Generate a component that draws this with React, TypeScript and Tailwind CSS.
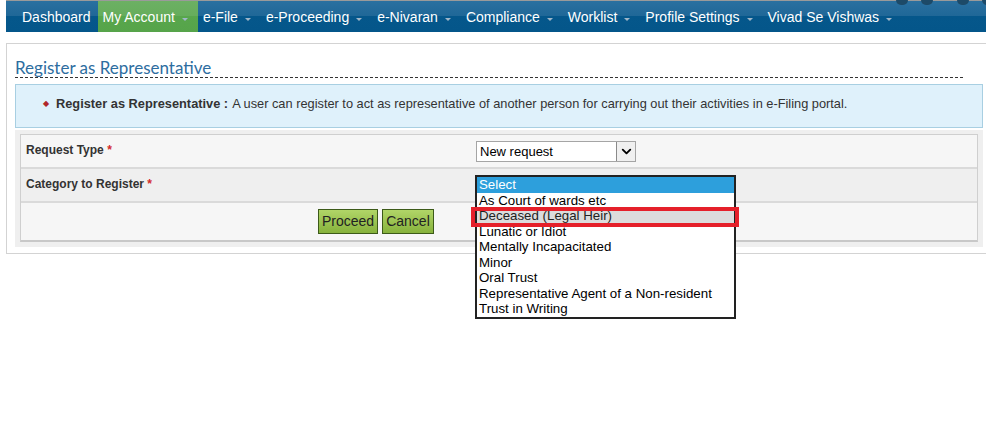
import { ChevronDown } from "lucide-react";

const navItems = [
  { label: "Dashboard", caret: false },
  { label: "My Account", caret: true, active: true },
  { label: "e-File", caret: true },
  { label: "e-Proceeding", caret: true },
  { label: "e-Nivaran", caret: true },
  { label: "Compliance", caret: true },
  { label: "Worklist", caret: true },
  { label: "Profile Settings", caret: true },
  { label: "Vivad Se Vishwas", caret: true },
];

const categories = [
  "As Court of wards etc",
  "Deceased (Legal Heir)",
  "Lunatic or Idiot",
  "Mentally Incapacitated",
  "Minor",
  "Oral Trust",
  "Representative Agent of a Non-resident",
  "Trust in Writing",
];

const Caret = () => (
  <span className="ml-[7px] inline-block w-0 h-0 border-l-[3px] border-r-[3px] border-t-[3px] border-l-transparent border-r-transparent border-t-[#9fb6c8] translate-y-[2px]" />
);

export default function App() {
  return (
    <div className="w-[986px] h-[439px] bg-white overflow-hidden font-['Liberation_Sans',Arial,sans-serif] text-[#333]">
      {/* Top nav */}
      <div className="relative ml-[6px] h-[32px] border-t border-[#9a9a9a] bg-[linear-gradient(#2a70a0_0%,#1f6797_50%,#05578b_50%,#04568a_100%)] flex items-stretch pl-[10px]">
        {navItems.map((item) => (
          <div
            key={item.label}
            className={`flex items-center pt-[2px] text-[14px] text-white ${
              item.caret ? "pl-[5px] pr-[10px]" : "pl-[6px] pr-[7px]"
            } ${item.active ? "bg-[linear-gradient(#6cb063_0%,#66ad5c_50%,#58a64c_50%,#56a44a_100%)]" : ""}`}
          >
            <span>{item.label}</span>
            {item.caret && <Caret />}
          </div>
        ))}
        {/* partial round buttons peeking at the top */}
        <div className="absolute top-[-6px] left-[890px] flex gap-[13px]">
          <span className="w-[12px] h-[10px] rounded-full bg-[#1d4a68]" />
          <span className="w-[12px] h-[10px] rounded-full bg-[#1d4a68]" />
          <span className="ml-[11px] w-[12px] h-[10px] rounded-full bg-[#1d4a68]" />
          <span className="w-[12px] h-[10px] rounded-full bg-[#1d4a68]" />
        </div>
      </div>

      {/* Content panel */}
      <div className="mt-[11px] ml-[6px] w-[990px] h-[211px] border border-[#d3d3d3] pl-[8px] pr-[12px]">
        <h2 className="mt-[15px] font-['Lato',sans-serif] text-[17px] leading-[18px] text-[#2d6d9f] w-[948px] border-b border-dashed border-[#333]">
          Register as Representative
        </h2>

        <div className="mt-[6px] w-[968px] h-[44px] bg-[#dff1fb] border border-[#a8cfe2] flex items-center pl-[27px] pb-[4px] text-[12.8px]">
          <span className="text-[#b0262a] text-[8px] mr-[7px]">◆</span>
          <span className="font-bold">Register as Representative :</span>
          <span className="ml-[4px]">
            A user can register to act as representative of another person for carrying out their activities in e-Filing portal.
          </span>
        </div>

        <div className="mt-[2px] w-[968px] bg-[#efefef] pt-[4px] pb-[5px] pl-[5px] pr-[5px]">
          <div className="border border-[#cfcfcf] border-b-[2px] border-b-[#c8c8c8]">
            <div className="h-[34px] bg-[#f6f6f6] border-b-[2px] border-[#dadada] flex">
              <div className="w-[455px] pl-[5px] pt-[6px] text-[12px] font-bold">
                Request Type <span className="text-[#d42a2a]">*</span>
              </div>
              <div className="pt-[6px]">
                <div className="w-[160px] h-[21px] bg-white border border-[#a5a5a5] flex items-center">
                  <span className="flex-1 pl-[3px] text-[13px] text-black">New request</span>
                  <span className="w-[19px] h-[19px] border-l border-[#8a8a8a] bg-[#f0f0f0] flex items-center justify-center">
                    <ChevronDown size={15} strokeWidth={3} className="text-black" />
                  </span>
                </div>
              </div>
            </div>
            <div className="h-[34px] bg-[#efefef] border-b-[2px] border-[#dadada] flex">
              <div className="w-[455px] pl-[5px] pt-[6px] text-[12px] font-bold">
                Category to Register <span className="text-[#d42a2a]">*</span>
              </div>
            </div>
            <div className="h-[37px] bg-[#f6f6f6] flex pl-[297px] pt-[6px] gap-[4px]">
              <button className="h-[25px] px-[3px] border border-[#3c5a19] bg-[linear-gradient(#b1d568,#86b23c)] text-[14px] text-[#222]">
                Proceed
              </button>
              <button className="h-[25px] px-[3px] border border-[#3c5a19] bg-[linear-gradient(#b1d568,#86b23c)] text-[14px] text-[#222]">
                Cancel
              </button>
            </div>
          </div>
        </div>
      </div>

      {/* Open dropdown list overlay */}
      <div className="absolute left-[475px] top-[175px] w-[261px] border-2 border-[#222] bg-white text-[13.3px] leading-[15.5px] text-black">
        <div className="bg-[#2d9fdc] text-white pl-[2px]">Select</div>
        {categories.map((c) => (
          <div
            key={c}
            className={`pl-[2px] ${c.startsWith("Deceased") ? "bg-[#dcdcdc] text-[#222]" : ""}`}
          >
            {c}
          </div>
        ))}
      </div>
      {/* Red annotation box */}
      <div className="absolute left-[471px] top-[207px] w-[268px] h-[20px] border-[4px] border-[#e5202a]" />
    </div>
  );
}
